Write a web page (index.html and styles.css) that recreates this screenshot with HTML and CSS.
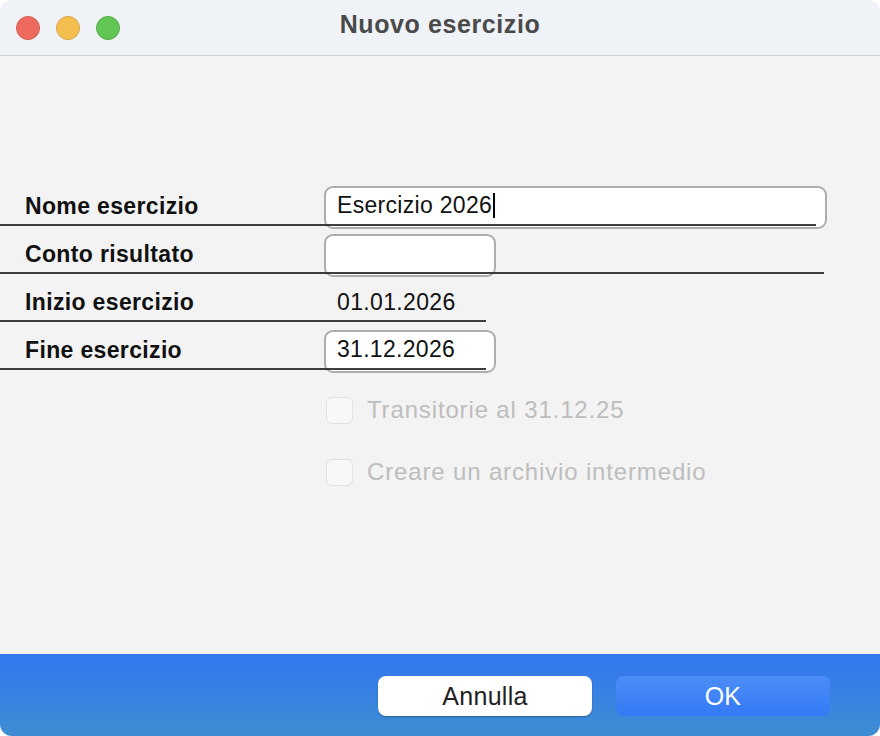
FILE: index.html
```html
<!DOCTYPE html>
<html lang="it">
<head>
    <meta charset="UTF-8">
    <meta name="viewport" content="width=device-width, initial-scale=1.0">
    <title>Nuovo esercizio</title>
    <link rel="stylesheet" href="styles.css">
</head>
<body>
    <div class="window">
        <header class="titlebar">
            <div class="lights">
                <span class="light close"></span>
                <span class="light minimize"></span>
                <span class="light zoom"></span>
            </div>
            <h1 class="title">Nuovo esercizio</h1>
            <div></div>
        </header>

        <main class="content">
            <div class="form">
                <div class="row rule-wide">
                    <div class="label">Nome esercizio</div>
                    <div class="field field-wide">Esercizio 2026<span class="caret"></span></div>
                </div>
                <div class="row rule-full">
                    <div class="label">Conto risultato</div>
                    <div class="field"></div>
                </div>
                <div class="row">
                    <div class="label">Inizio esercizio</div>
                    <div class="value">01.01.2026</div>
                </div>
                <div class="row">
                    <div class="label">Fine esercizio</div>
                    <div class="field">31.12.2026</div>
                </div>
            </div>

            <div class="options">
                <label class="option"><span class="checkbox"></span>Transitorie al 31.12.25</label>
                <label class="option"><span class="checkbox"></span>Creare un archivio intermedio</label>
            </div>
        </main>

        <footer class="footer">
            <button class="btn btn-cancel">Annulla</button>
            <button class="btn btn-ok">OK</button>
        </footer>
    </div>
</body>
</html>
```

FILE: styles.css
```css
* {
    margin: 0;
    padding: 0;
    box-sizing: border-box;
    font-family: "Liberation Sans", Arial, sans-serif;
}

body {
    background: #fff;
}

.window {
    width: 880px;
    height: 736px;
    border-radius: 12px;
    overflow: hidden;
    display: flex;
    flex-direction: column;
    background: #f3f3f3;
}

/* title bar */
.titlebar {
    height: 56px;
    flex: none;
    display: grid;
    grid-template-columns: 1fr auto 1fr;
    align-items: center;
    padding: 0 16px;
    background: #eff2f6;
    border-bottom: 1px solid #d3d3d3;
}

.lights {
    display: flex;
    gap: 16px;
    padding-top: 1px;
}

.light {
    width: 24px;
    height: 24px;
    border-radius: 50%;
    border: 1px solid;
}

.close {
    background: #ee6a5f;
    border-color: #d65a4f;
}

.minimize {
    background: #f5bf4f;
    border-color: #d9a443;
}

.zoom {
    background: #62c655;
    border-color: #50ad44;
}

.title {
    font-size: 25px;
    font-weight: bold;
    letter-spacing: 0.6px;
    color: #4a4a4a;
    margin-bottom: 6px;
}

/* form */
.content {
    flex: 1;
    padding-top: 122px;
}

.row {
    position: relative;
    display: flex;
    height: 48px;
}

.row::after {
    content: "";
    position: absolute;
    left: 0;
    bottom: 0;
    width: 486px;
    height: 2px;
    background: #3d3d3d;
}

.rule-wide::after {
    width: 816px;
}

.rule-full::after {
    width: 824px;
}

.label {
    width: 324px;
    flex: none;
    padding: 15px 0 0 25px;
    font-size: 23px;
    font-weight: bold;
    line-height: 26px;
    letter-spacing: 0.35px;
    color: #111;
}

.field {
    width: 172px;
    height: 43px;
    margin-top: 8px;
    padding: 0 11px;
    background: #fff;
    border: 2px solid #adadad;
    border-radius: 9px;
    font-size: 23px;
    line-height: 35px;
    letter-spacing: 0.3px;
    color: #111;
    white-space: nowrap;
}

.field-wide {
    width: 503px;
}

.caret {
    display: inline-block;
    width: 1.5px;
    height: 25px;
    margin-left: 1px;
    vertical-align: -5px;
    background: #000;
}

.value {
    padding: 15px 0 0 13px;
    font-size: 23px;
    line-height: 26px;
    letter-spacing: 0.35px;
    color: #111;
}

/* disabled checkboxes */
.options {
    display: flex;
    flex-direction: column;
    gap: 34px;
    margin-top: 26px;
    padding-left: 326px;
}

.option {
    display: flex;
    align-items: center;
    gap: 14px;
    height: 28px;
    font-size: 24px;
    letter-spacing: 0.85px;
    color: #bdbdbd;
}

.checkbox {
    width: 27px;
    height: 27px;
    border: 1.5px solid #e1e1e1;
    border-radius: 6px;
    background: #f8f8f8;
}

/* footer */
.footer {
    height: 82px;
    flex: none;
    display: flex;
    justify-content: flex-end;
    gap: 24px;
    padding: 22px 50px 0 0;
    background: linear-gradient(to bottom, #3377f1, #3e8dd2);
}

.btn {
    width: 214px;
    height: 40px;
    border: none;
    border-radius: 8px;
    font-size: 25px;
    letter-spacing: 0.3px;
    cursor: pointer;
}

.btn-cancel {
    background: #fff;
    color: #222;
    box-shadow: 0 1px 1.5px rgba(0, 0, 0, 0.3);
}

.btn-ok {
    background: linear-gradient(to bottom, #4b8ef6, #3479f6);
    color: #fff;
}
```
